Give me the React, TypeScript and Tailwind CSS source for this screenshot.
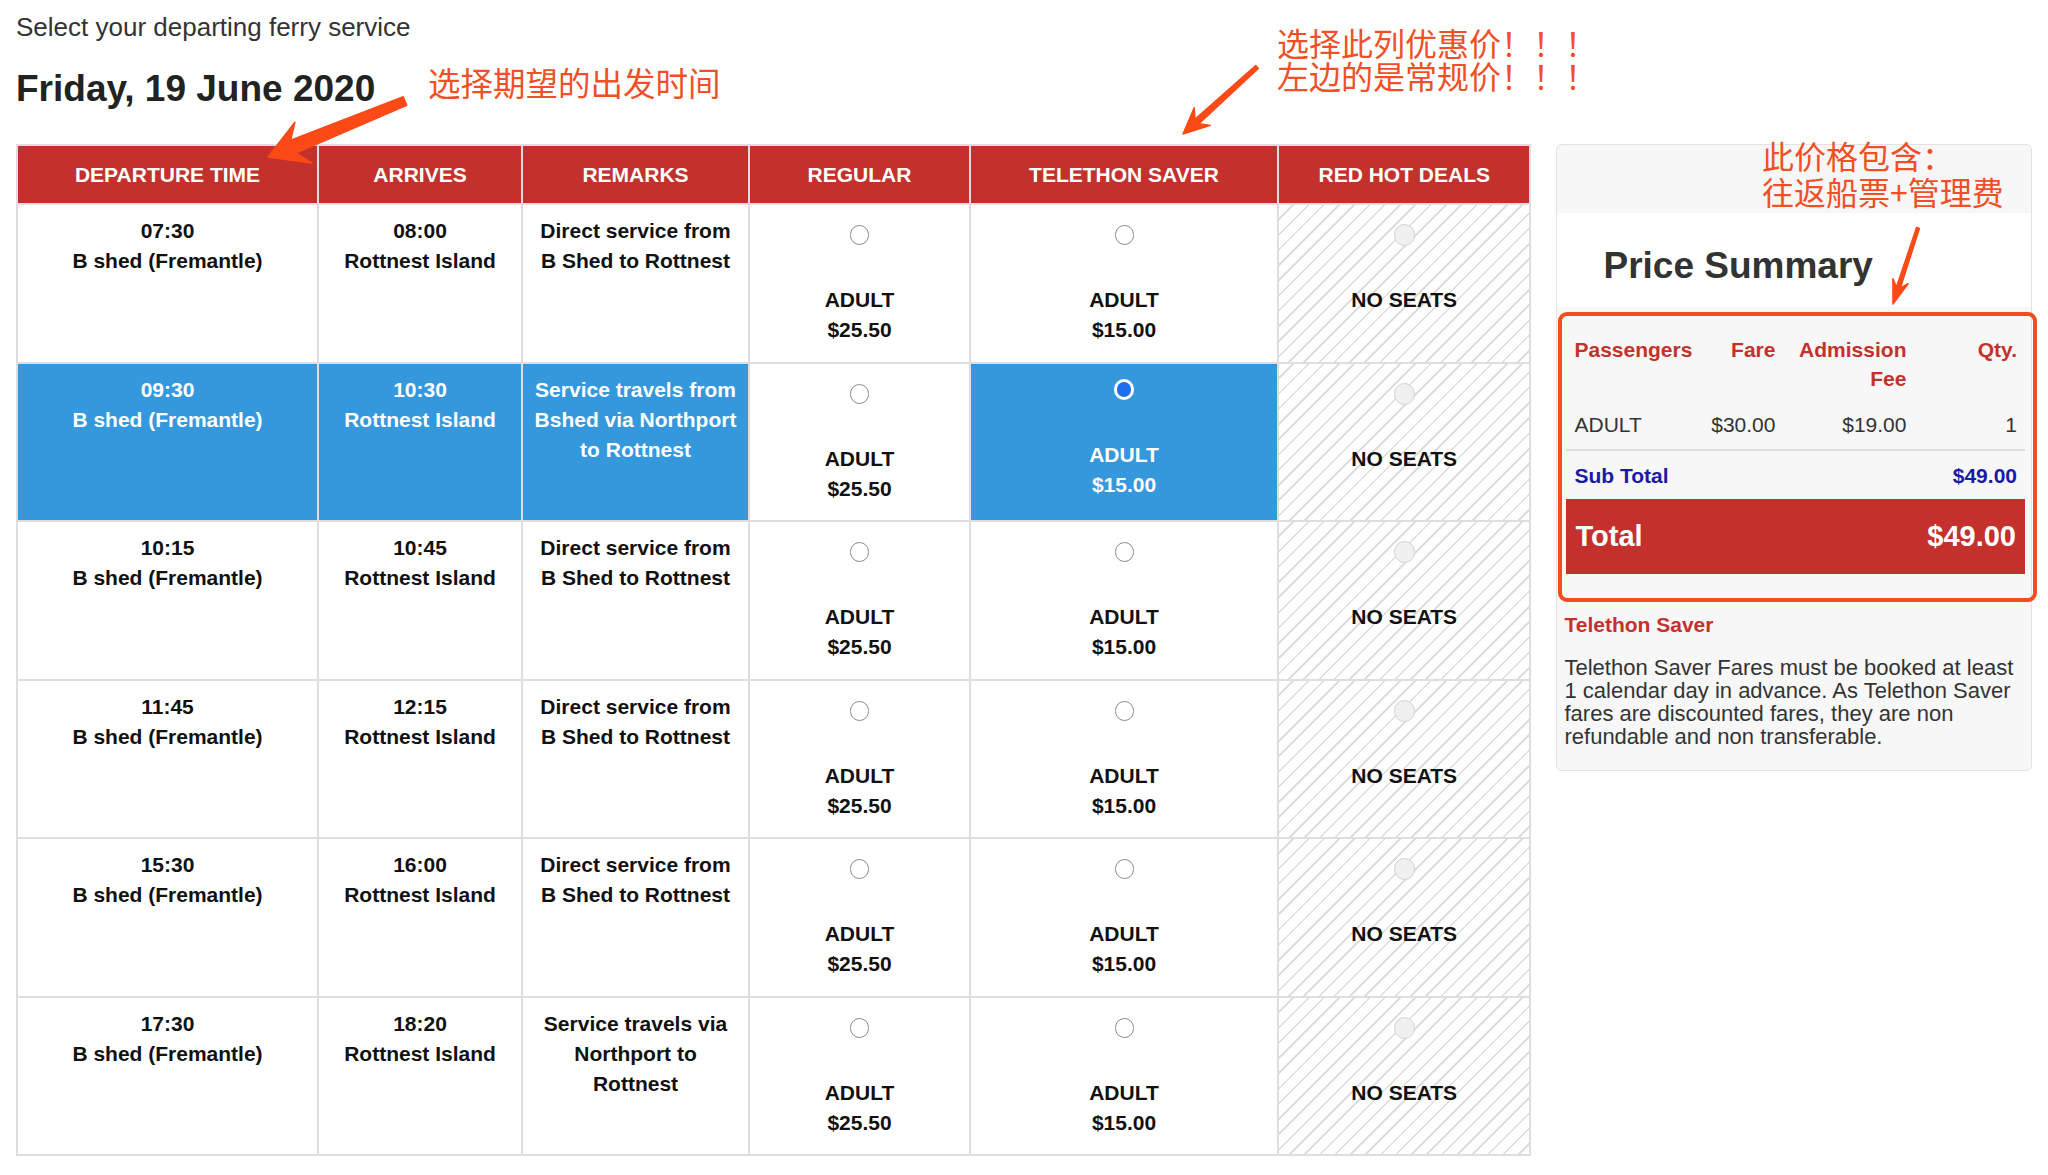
import React from "react";
import clsx from "clsx";

const FONT = "font-['Liberation_Sans',Arial,sans-serif]";
const CJK = "font-['Noto_Sans_CJK_SC','Noto_Sans',sans-serif]";

type Row = {
  dep: string;
  arr: string;
  remarks: string[];
  selected?: boolean;
  tall: boolean;
};

const direct = ["Direct service from", "B Shed to Rottnest"];

const rows: Row[] = [
  { dep: "07:30", arr: "08:00", remarks: direct, tall: true },
  { dep: "09:30", arr: "10:30", remarks: ["Service travels from", "Bshed via Northport", "to Rottnest"], selected: true, tall: false },
  { dep: "10:15", arr: "10:45", remarks: direct, tall: true },
  { dep: "11:45", arr: "12:15", remarks: direct, tall: false },
  { dep: "15:30", arr: "16:00", remarks: direct, tall: true },
  { dep: "17:30", arr: "18:20", remarks: ["Service travels via", "Northport to", "Rottnest"], tall: false },
];

const cols = "grid grid-cols-[299px_202px_225px_219px_306px_1fr] gap-[2px]";

const TextCell = ({ lines, blue }: { lines: string[]; blue?: boolean }) => (
  <div
    className={clsx(
      "pt-[11px] text-center text-[21px] font-bold leading-[30px]",
      blue ? "bg-[#3598dc] text-white" : "bg-white text-[#111]"
    )}
  >
    {lines.map((l) => (
      <div key={l}>{l}</div>
    ))}
  </div>
);

const PriceCell = ({ price, checked }: { price: string; checked?: boolean }) => (
  <div
    className={clsx(
      "flex flex-col items-center text-[21px] font-bold leading-[30px]",
      checked ? "bg-[#3598dc] pt-[15px] text-white" : "bg-white pt-[20px] text-[#111]"
    )}
  >
    {checked ? (
      <span className="h-[21px] w-[20px] rounded-full border-[3px] border-white bg-[#1f6ef0]" />
    ) : (
      <span className="h-[20px] w-[19px] rounded-full border-[1.5px] border-[#8c8c8c] bg-white" />
    )}
    <div className="mt-[40px]">ADULT</div>
    <div>{price}</div>
  </div>
);

const NoSeatsCell = () => (
  <div className="flex flex-col items-center bg-[repeating-linear-gradient(135deg,#ffffff_0px,#ffffff_9px,#dedede_9px,#dedede_10.8px)] pt-[19px] text-[21px] font-bold leading-[30px] text-[#111]">
    <span className="h-[22px] w-[21px] rounded-full border border-[#d2d2d2] bg-[#f0f0f0]" />
    <div className="mt-[39px]">NO SEATS</div>
  </div>
);

type ArrowProps = { x1: number; y1: number; x2: number; y2: number; tw: number; sw: number; hw: number; hl: number };

const Arrow = ({ x1, y1, x2, y2, tw, sw, hw, hl }: ArrowProps) => {
  const dx = x2 - x1;
  const dy = y2 - y1;
  const len = Math.hypot(dx, dy);
  const d = [dx / len, dy / len];
  const n = [-d[1], d[0]];
  const p = (base: number[], along: number, side: number) =>
    `${(base[0] + d[0] * along + n[0] * side).toFixed(1)},${(base[1] + d[1] * along + n[1] * side).toFixed(1)}`;
  const T = [x2, y2];
  const S = [x1, y1];
  const pts = [
    p(S, 0, tw / 2),
    p(T, -hl * 0.72, sw / 2),
    p(T, -hl, hw / 2),
    p(T, 0, 0),
    p(T, -hl, -hw / 2),
    p(T, -hl * 0.72, -sw / 2),
    p(S, 0, -tw / 2),
  ].join(" ");
  return <polygon points={pts} fill="#fb4a16" stroke="#fb4a16" strokeWidth={1.5} strokeLinejoin="round" />;
};

export default function App() {
  return (
    <div className={clsx("relative flex h-[1175px] w-[2048px] gap-[25px] overflow-hidden bg-white px-[16px]", FONT)}>
      {/* left column */}
      <div className="w-[1517px] pt-[13px]">
        <div className="text-[26px] leading-[28px] text-[#333]">Select your departing ferry service</div>
        <div className="mt-[27px] text-[37px] font-bold leading-[42px] text-[#222]">Friday, 19 June 2020</div>

        <div className="mt-[34px] flex flex-col gap-[2px] border-2 border-[#dedede] bg-[#dedede]">
          <div className={clsx(cols, "h-[57px]")}>
            {["DEPARTURE TIME", "ARRIVES", "REMARKS", "REGULAR", "TELETHON SAVER", "RED HOT DEALS"].map((h) => (
              <div key={h} className="flex items-center justify-center bg-[#c4312c] text-[21px] font-bold text-white">
                {h}
              </div>
            ))}
          </div>
          {rows.map((r) => (
            <div key={r.dep} className={clsx(cols, r.tall ? "h-[157px]" : "h-[156px]")}>
              <TextCell lines={[r.dep, "B shed (Fremantle)"]} blue={r.selected} />
              <TextCell lines={[r.arr, "Rottnest Island"]} blue={r.selected} />
              <TextCell lines={r.remarks} blue={r.selected} />
              <PriceCell price="$25.50" />
              <PriceCell price="$15.00" checked={r.selected} />
              <NoSeatsCell />
            </div>
          ))}
        </div>
      </div>

      {/* price summary panel */}
      <div className="mt-[144px] h-[627px] w-[476px] rounded-[6px] border border-[#e2e2e2] bg-[#f7f7f7]">
        <div className="mt-[68px] h-[94px] bg-white pl-[46px] pt-[33px] text-[37px] font-bold leading-[40px] text-[#333]">
          Price Summary
        </div>
        <div className="mt-[28px] pl-[9px] pr-[6px] text-[21px] leading-[29px]">
          <div className="grid grid-cols-[120px_81px_131px_1fr] px-[8px] font-bold text-[#c4312c]">
            <div>Passengers</div>
            <div className="text-right">Fare</div>
            <div className="text-right">
              Admission
              <br />
              Fee
            </div>
            <div className="text-right">Qty.</div>
          </div>
          <div className="mt-[17px] border-b-2 border-[#dddddd] pb-[10px]">
            <div className="grid grid-cols-[120px_81px_131px_1fr] px-[8px] text-[#333]">
              <div>ADULT</div>
              <div className="text-right">$30.00</div>
              <div className="text-right">$19.00</div>
              <div className="text-right">1</div>
            </div>
          </div>
          <div className="flex justify-between px-[8px] pt-[10px] font-bold text-[#1a1aa6]">
            <span>Sub Total</span>
            <span>$49.00</span>
          </div>
          <div className="mt-[9px] flex h-[75px] items-center justify-between bg-[#c4312c] px-[9px] text-[29px] font-bold text-white">
            <span>Total</span>
            <span>$49.00</span>
          </div>
        </div>
        <div className="mt-[39px] px-[7px]">
          <div className="text-[21px] font-bold leading-[24px] text-[#c4312c]">Telethon Saver</div>
          <p className="mt-[19px] whitespace-nowrap text-[22px] leading-[23px] text-[#333]">
            Telethon Saver Fares must be booked at least
            <br />1 calendar day in advance. As Telethon Saver
            <br />
            fares are discounted fares, they are non
            <br />
            refundable and non transferable.
          </p>
        </div>
      </div>

      {/* annotations */}
      <div className={clsx("absolute left-[428px] top-[62px] text-[32.5px] leading-[40px] text-[#ef5028]", CJK)}>
        选择期望的出发时间
      </div>
      <div className={clsx("absolute left-[1277px] top-[26px] text-[32px] leading-[33px] text-[#ef5028]", CJK)}>
        <div>选择此列优惠价！！！</div>
        <div>左边的是常规价！！！</div>
      </div>
      <div className={clsx("absolute left-[1762px] top-[137px] text-[32px] leading-[36px] text-[#ef5028]", CJK)}>
        <div>此价格包含：</div>
        <div>往返船票+管理费</div>
      </div>
      <div className="pointer-events-none absolute left-[1558px] top-[312px] h-[290px] w-[479px] rounded-[9px] border-4 border-[#f24d1d]" />
      <svg className="pointer-events-none absolute left-0 top-0" width={2048} height={1175}>
        <Arrow x1={405} y1={101} x2={268} y2={157} tw={9} sw={14} hw={44} hl={38} />
        <Arrow x1={1257} y1={67} x2={1183} y2={134} tw={4} sw={6} hw={24} hl={26} />
        <Arrow x1={1918} y1={228} x2={1893} y2={304} tw={3} sw={4} hw={16} hl={24} />
      </svg>
    </div>
  );
}
